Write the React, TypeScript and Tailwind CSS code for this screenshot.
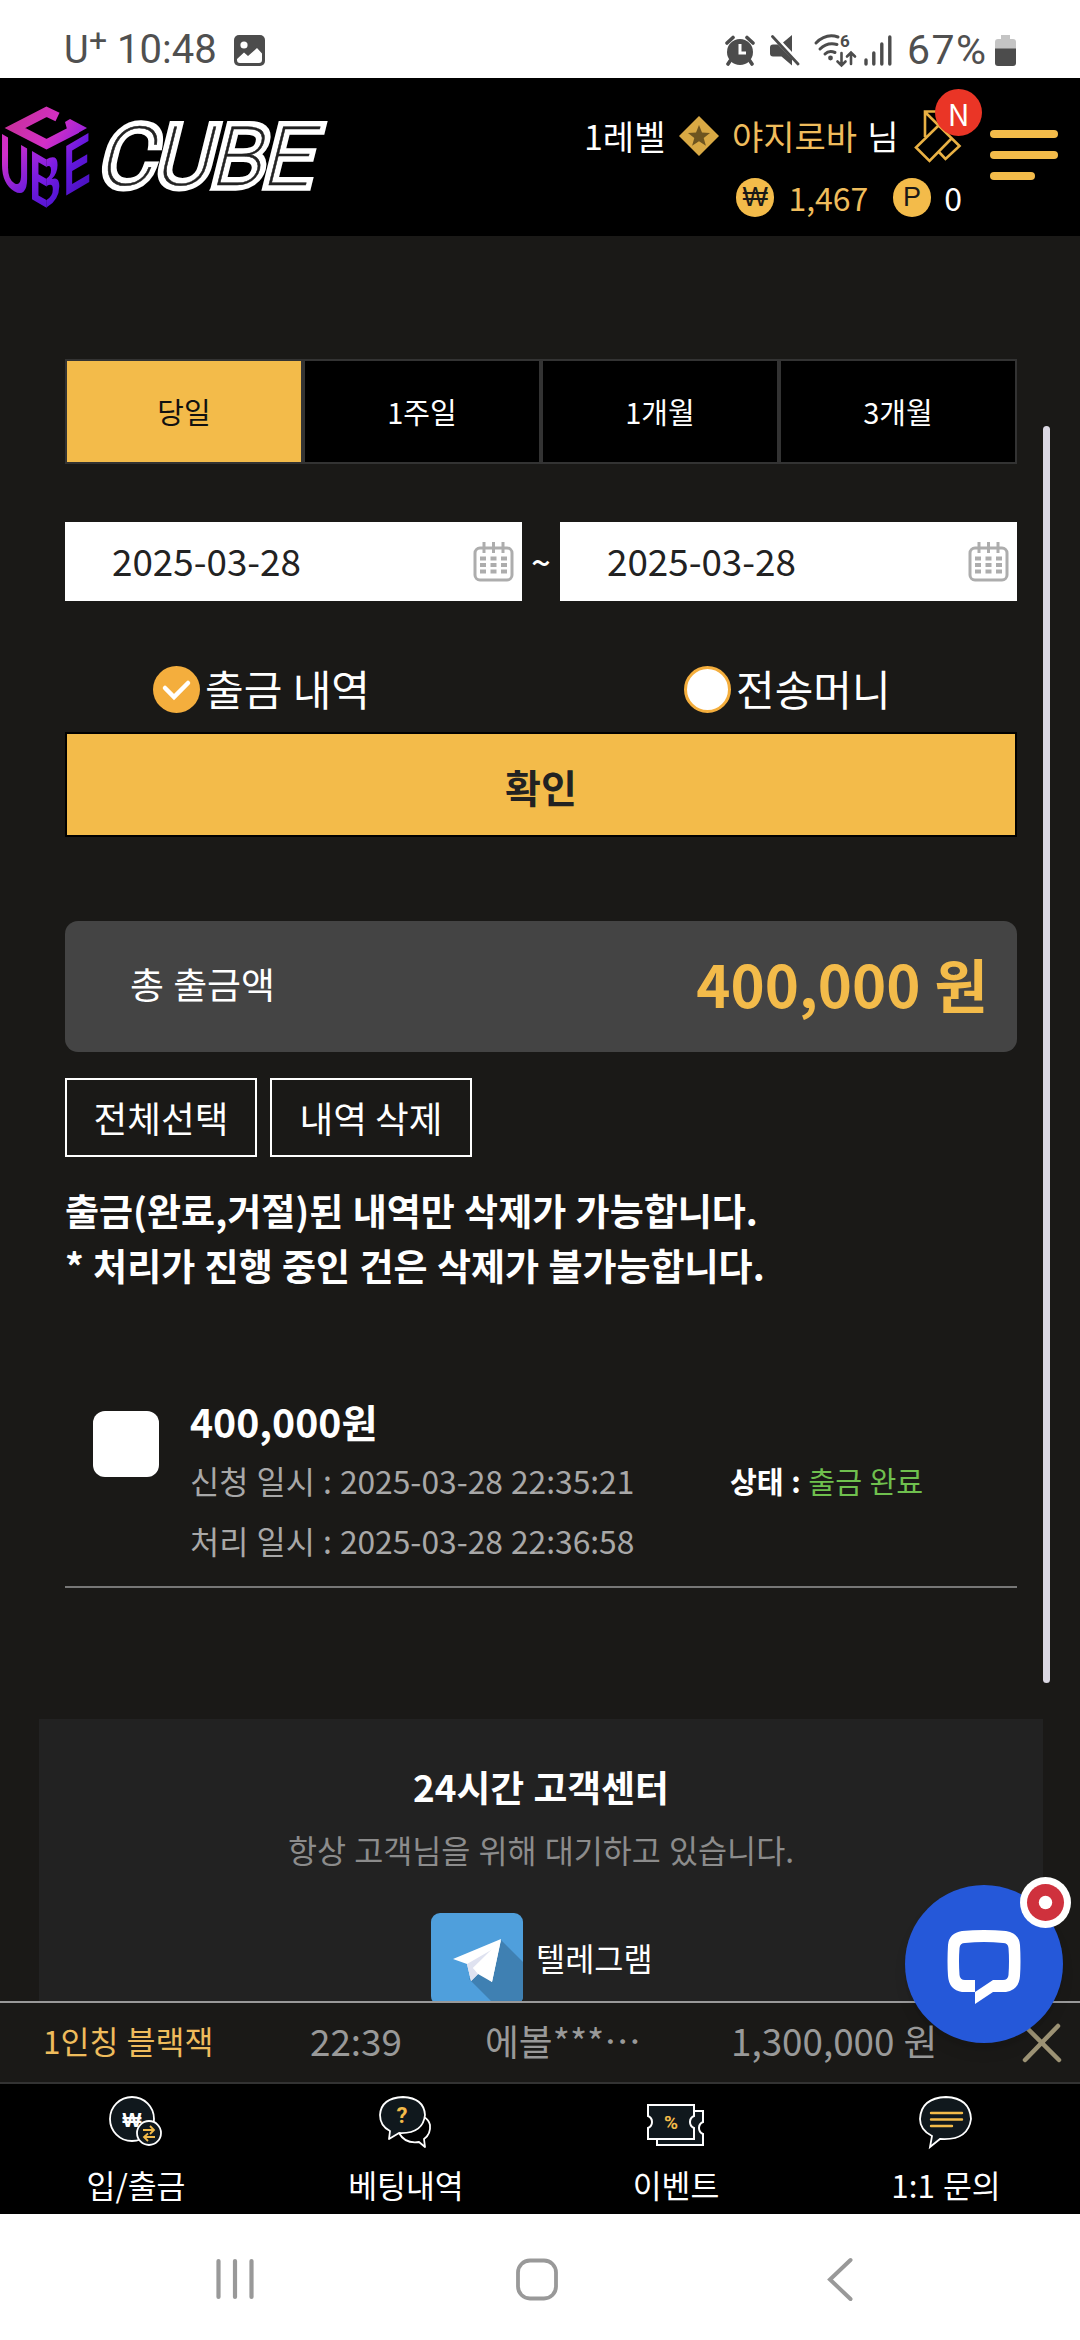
import type { ReactNode } from "react";

const GOLD = "#f3bb4a";

function StatusBar() {
  return (
    <div className="flex h-[78px] items-center bg-white pl-[64px] pr-[64px] pt-[22px] font-[Roboto] text-[40px] font-light leading-[56px] text-[#505050]">
      <span className="w-[25px] text-[38px] font-normal">U</span>
      <span className="-mt-[20px] w-[28px] text-[32px] font-normal">+</span>
      <span className="w-[112px] whitespace-nowrap font-normal">10:48</span>
      <svg className="ml-[5px]" width="31" height="31" viewBox="0 0 31 31">
        <rect width="31" height="31" rx="5" fill="#4c4c4c" />
        <circle cx="10" cy="10" r="3.6" fill="#fff" />
        <path d="M3 24 10 17.5 14 21 23 13 28 18.5V25a3 3 0 0 1-3 3H6a3 3 0 0 1-3-3z" fill="#fff" />
      </svg>
      <div className="ml-auto flex items-center">
        <svg width="30" height="31" viewBox="0 0 30 31" className="mr-[15px]">
          <circle cx="15" cy="17" r="13" fill="#4c4c4c" />
          <path d="M2 8 8 2.500M22 2.500 28 8M5 26 3 29M25 26 27 29" stroke="#4c4c4c" strokeWidth="3.600" strokeLinecap="round" />
          <path d="M15 9v9h6" stroke="#fff" strokeWidth="3" fill="none" />
        </svg>
        <svg width="30" height="31" viewBox="0 0 30 31" className="mr-[14px]">
          <path d="M3 9.500h5L22 24v6.500L11.500 21.500H3a3 3 0 0 1-3-3v-6a3 3 0 0 1 3-3zM13 7.500 22 0V17z" fill="#4c4c4c" />
          <path d="M2.500 1.500 28 29" stroke="#4c4c4c" strokeWidth="2.800" strokeLinecap="round" />
        </svg>
        <svg width="42" height="34" viewBox="0 0 42 34" fill="none" className="mr-[8px] overflow-visible">
          <g stroke="#4c4c4c" strokeWidth="3" strokeLinecap="round">
            <path d="M2 10Q12 0 24 4M6 16Q13 9 23 11.500M11 21Q15 17 21 19.500" />
            <path d="M27.500 20V32M23.500 28.500l4 4 4-4M37 31V19.500M33 23.500l4-4 4 4" strokeWidth="2.600" />
          </g>
          <circle cx="16.500" cy="25" r="2.400" fill="#4c4c4c" />
          <text x="26" y="14" fontSize="17" fontWeight="700" fontFamily="Roboto" fill="#4c4c4c">6</text>
        </svg>
        <svg width="28" height="31" viewBox="0 0 28 31" className="mr-[15px]">
          <path d="M2 25v4M9.800 18v11M17.800 9v20M25.800 2v27" stroke="#4c4c4c" strokeWidth="3.400" strokeLinecap="round" />
        </svg>
        <span className="w-[88px] whitespace-nowrap text-[41px] font-normal tracking-[1.500px]">67%</span>
        <svg width="21" height="31" viewBox="0 0 21 31">
          <path d="M6 0h9v4h3a3 3 0 0 1 3 3v8H0V7a3 3 0 0 1 3-3h3z" fill="#c4c4c4" />
          <path d="M0 13.500h21V28a3 3 0 0 1-3 3H3a3 3 0 0 1-3-3z" fill="#4c4c4c" />
        </svg>
      </div>
    </div>
  );
}

function Logo() {
  return (
    <svg width="332" height="112" viewBox="0 100 332 112" className="overflow-visible">
      <defs>
        <linearGradient id="cube" gradientUnits="userSpaceOnUse" x1="20" y1="110" x2="85" y2="150">
          <stop offset="0" stopColor="#c9309e" />
          <stop offset="0.500" stopColor="#d32fc6" />
          <stop offset="1" stopColor="#8a1fe0" />
        </linearGradient>
        <linearGradient id="faceL" x1="0" y1="0" x2="0.600" y2="1">
          <stop offset="0" stopColor="#d22fb4" />
          <stop offset="0.400" stopColor="#cf2fcb" />
          <stop offset="1" stopColor="#5f19dd" />
        </linearGradient>
        <linearGradient id="faceM" x1="0" y1="0" x2="0.300" y2="1">
          <stop offset="0" stopColor="#c42fd0" />
          <stop offset="0.500" stopColor="#7c1ce2" />
          <stop offset="1" stopColor="#4d14d0" />
        </linearGradient>
        <linearGradient id="faceR" x1="0" y1="0" x2="0.300" y2="1">
          <stop offset="0" stopColor="#a526dd" />
          <stop offset="0.500" stopColor="#6317de" />
          <stop offset="1" stopColor="#4a12c0" />
        </linearGradient>
        <clipPath id="halfL"><rect x="0" y="100" width="46.600" height="112" /></clipPath>
        <clipPath id="halfR"><rect x="46.400" y="100" width="60" height="112" /></clipPath>
      </defs>
      <path d="M57.500 117 46.500 111.800 15 128 46.500 144.200 77 128.500" fill="none" stroke="url(#cube)" strokeWidth="9.500" />
      <path d="M65 122 70 119 87 128 78 133 67 129z" fill="url(#cube)" />
      <g fontFamily="Liberation Sans" fontWeight="700">
        <text transform="matrix(0.58 0.335 0 1 -0.500 182)" fontSize="72" fill="url(#faceL)">U</text>
        <g clipPath="url(#halfL)">
          <text transform="matrix(0.64 0.370 0 1 29 197.500)" fontSize="70" fill="url(#faceM)">B</text>
        </g>
        <g clipPath="url(#halfR)">
          <text transform="matrix(0.64 -0.370 0 1 29 217.500)" fontSize="70" fill="url(#faceM)">B</text>
        </g>
        <text transform="matrix(0.570 -0.330 0 1 63.500 197)" fontSize="72" fill="url(#faceR)">E</text>
      </g>
      <g transform="translate(97 184.500) skewX(-14)" fontFamily="Roboto" fontWeight="100" fontSize="82">
        <text textLength="212" lengthAdjust="spacingAndGlyphs" fill="#222" stroke="#fff" strokeWidth="11.500" strokeLinejoin="miter">CUBE</text>
        <text textLength="212" lengthAdjust="spacingAndGlyphs" fill="#222" stroke="#222" strokeWidth="0.500">CUBE</text>
      </g>
    </svg>
  );
}

function Coin({ children }: { children: ReactNode }) {
  return (
    <span className="flex size-[39px] items-center justify-center rounded-full bg-[#f3bb4a] font-['Liberation_Sans'] text-[27px] leading-none text-[#1a1917]">
      {children}
    </span>
  );
}

function Header() {
  return (
    <header className="flex h-[158px] bg-black">
      <div className="w-[332px] pt-[22px]"><Logo /></div>
      <div className="ml-auto flex w-[378px] flex-col">
        <div className="relative mt-[30px] flex h-[56px] items-center whitespace-nowrap text-[34px] leading-[56px] text-white">
          <span className="w-[95px]">1레벨</span>
          <svg width="40" height="40" viewBox="0 0 40 40">
            <path d="M20 0 40 20 20 40 0 20z" fill="#d9a944" />
            <path d="m20 9 3 7.500 8 .4-6.300 5 2.200 7.800-6.900-4.500-6.900 4.500 2.200-7.800-6.300-5 8-.4z" fill="#6e5520" />
          </svg>
          <span className="ml-[13px] text-[#efbc5c]">야지로바</span>
          <span className="ml-[10px]">님</span>
          <svg className="absolute left-[330px] top-0" width="48" height="56" viewBox="0 0 48 56" fill="none" stroke="#e9b144" strokeWidth="2.600">
            <path d="M11 29V3.500H33M11 4 45.500 38 31.500 51 24 43M24 18 2 39.500 15.500 53 38 30" />
          </svg>
          <span className="absolute left-[351px] top-[-19px] flex size-[47px] items-center justify-center rounded-full bg-[#ea3526] text-[30px] leading-none">N</span>
        </div>
        <div className="ml-[152px] mt-[3px] flex h-[60px] items-center text-[32px] leading-[60px]">
          <Coin>₩</Coin>
          <span className="ml-[14px] w-[106px] text-[#efbc5c]">1,467</span>
          <Coin>P</Coin>
          <span className="ml-[13px] text-white">0</span>
        </div>
      </div>
      <div className="ml-[28px] mr-[22px] mt-[52px] flex w-[68px] flex-col gap-[13px]">
        <i className="h-[8px] rounded-full bg-[#f3bb4a]" />
        <i className="h-[8px] rounded-full bg-[#f3bb4a]" />
        <i className="h-[8px] w-[45px] rounded-full bg-[#f3bb4a]" />
      </div>
    </header>
  );
}

function DateField() {
  return (
    <div className="flex h-[79px] w-[457px] items-center justify-between bg-white pl-[47px] pr-[8px] text-[36.800px] text-[#222]">
      <span className="-mt-[2px]">2025-03-28</span>
      <svg width="41" height="40" viewBox="0 0 41 40" fill="none" stroke="#adadad" strokeWidth="3">
        <rect x="2" y="6" width="37" height="32" rx="5" />
        <path d="M11 0v11M20.500 0v11M30 0v11" />
        <path d="M7 16.500h27M7 23h27M7 29.500h27" strokeWidth="4" strokeDasharray="6 4.500" />
      </svg>
    </div>
  );
}

function History() {
  return (
    <main className="mx-[65px] mr-[63px] w-[952px] pt-[123px] text-white">
      <div className="flex h-[105px] w-[952px] text-[29px]">
        {["당일", "1주일", "1개월", "3개월"].map((t, i) => (
          <button key={t} className={i === 0 ? "w-[238px] border-2 border-[#333] bg-[#f3bb4a] text-[#111]" : "w-[238px] border-2 border-[#333] bg-black"}>
            {t}
          </button>
        ))}
      </div>
      <div className="mt-[58px] flex h-[79px] items-center justify-between">
        <DateField />
        <span className="text-[34px] font-medium">~</span>
        <DateField />
      </div>
      <div className="mt-[61px] flex h-[55px] items-center text-[42px] leading-[55px]">
        <label className="flex w-[531px] items-center gap-[5px] pl-[88px]">
          <svg width="47" height="47" viewBox="0 0 47 47">
            <circle cx="23.500" cy="23.500" r="23.500" fill="#f4ae3d" />
            <path d="m12 22 9 9 14-14" fill="none" stroke="#fff" strokeWidth="4.500" strokeLinecap="round" />
          </svg>
          <span className="-mt-[4px]">출금 내역</span>
        </label>
        <label className="flex items-center gap-[5px] pl-[88px]">
          <span className="size-[47px] rounded-full border-[3px] border-[#f4ae3d] bg-white" />
          <span className="-mt-[4px]">전송머니</span>
        </label>
      </div>
      <button className="mt-[15px] block h-[105px] w-full border-2 border-black bg-[#f3bb4a] pt-[3px] text-[39px] font-bold text-[#222]">확인</button>
      <section className="mt-[84px] flex h-[131px] items-center justify-between rounded-[13px] bg-[#444] pl-[65px] pr-[29px]">
        <span className="-mt-[6px] text-[36.900px]">총 출금액</span>
        <span className="-mt-[6px] text-[58px] font-bold text-[#f3bb4a]">400,000 원</span>
      </section>
      <div className="mt-[26px] flex gap-[13px] text-[36.700px]">
        <button className="h-[79px] w-[192px] whitespace-nowrap border-2 border-white">전체선택</button>
        <button className="h-[79px] w-[202px] whitespace-nowrap border-2 border-white">내역 삭제</button>
      </div>
      <p className="mt-[26px] whitespace-nowrap text-[37px] font-bold leading-[55px]">
        출금(완료,거절)된 내역만 삭제가 가능합니다.
        <br />* 처리가 진행 중인 건은 삭제가 불가능합니다.
      </p>
      <article className="mt-[104px] flex h-[191px] whitespace-nowrap border-b-2 border-[#777] pl-[28px]">
        <span className="mt-[14px] size-[66px] rounded-[12px] bg-white" />
        <div className="ml-[31px] w-[540px] text-[31.750px] leading-[60px] text-[#a8a8a8]">
          <div className="h-[53px] text-[39.200px] font-bold leading-[48px] text-white">400,000원</div>
          <div>신청 일시 : 2025-03-28 22:35:21</div>
          <div>처리 일시 : 2025-03-28 22:36:58</div>
        </div>
        <div className="mt-[53px] text-[29.200px] leading-[60px]">
          <b>상태 :</b> <span className="text-[#6fc04e]">출금 완료</span>
        </div>
      </article>
    </main>
  );
}

function Support() {
  return (
    <section className="ml-[39px] mt-[131px] flex h-[282px] w-[1004px] flex-col items-center overflow-hidden bg-[#222]">
      <h2 className="mt-[39px] text-[36.800px] font-bold leading-[56px] text-white">24시간 고객센터</h2>
      <p className="mt-[10px] text-[31.600px] leading-[50px] text-[#8c8c8c]">항상 고객님을 위해 대기하고 있습니다.</p>
      <div className="mt-[39px] flex items-center gap-[13px] self-start pl-[392px] text-[31.700px] text-white">
        <svg width="92" height="92" viewBox="0 0 92 92">
          <rect width="92" height="92" rx="9" fill="#4f9fdc" />
          <path d="m70 27 22 22v34a9 9 0 0 1-9 9H64L38 66z" fill="#3f80b2" />
          <path d="m22 46 48-20-9 43-14-8-7 7-4-17z" fill="#fff" />
          <path d="m36 51 4 17 7-7-5-6 20-19z" fill="#dfe2f0" />
          <path d="m42 55 28-28-9 42z" fill="#fff" />
        </svg>
        <span className="-mt-[3px]">텔레그램</span>
      </div>
    </section>
  );
}

function Ticker() {
  return (
    <div className="flex h-[83px] items-center whitespace-nowrap border-b-2 border-t-2 border-b-[#333] border-t-[#999] bg-[#1a1917] pl-[43px] text-[36.800px] text-[#999]">
      <span className="-mt-[3px] w-[267px] text-[31.500px] text-[#efbc5c]">1인칭 블랙잭</span>
      <span className="-mt-[3px] w-[175px]">22:39</span>
      <span className="-mt-[3px] w-[246px]" lang="ko">에볼***…</span>
      <span className="-mt-[3px] w-[291px]">1,300,000 원</span>
      <svg width="40" height="40" viewBox="0 0 40 40" stroke="#9c9274" strokeWidth="4.500" strokeLinecap="round">
        <path d="m3 3 34 34M36 3 3 37" />
      </svg>
    </div>
  );
}

function MoneyIcon() {
  return (
    <svg width="54" height="54" viewBox="0 0 54 54">
      <circle cx="23" cy="23" r="22" fill="#10181d" stroke="#fff" strokeWidth="1.800" />
      <text x="23" y="30.500" textAnchor="middle" fontSize="20" fontWeight="700" fontFamily="Liberation Sans" fill="#fff">₩</text>
      <circle cx="40" cy="37" r="12" fill="#10181d" stroke="#fff" strokeWidth="1.800" />
      <path d="M34 34h11m-4-4 4 4-4 4M46 41H35m4-3.500-4 3.500 4 4" fill="none" stroke={GOLD} strokeWidth="1.800" />
    </svg>
  );
}

function QuestionIcon() {
  return (
    <svg width="54" height="54" viewBox="0 0 54 54" stroke="#fff" strokeWidth="1.800" strokeLinejoin="round">
      <path d="M20 37Q26 48 40 46l6 5-1-8Q52 38 51 29 50 24 45 21" fill="#000" />
      <path d="M11 35Q1 30 1 19 2 2 24 1 45 2 46 19 44 38 20 37L10 43z" fill="#10181d" />
      <text x="23" y="27" textAnchor="middle" fontSize="22" fontWeight="700" fontFamily="Roboto" fill={GOLD} stroke="none">?</text>
    </svg>
  );
}

function CouponIcon() {
  return (
    <svg width="60" height="54" viewBox="0 0 60 54" fill="#10181d" stroke="#fff" strokeWidth="2">
      <path d="M11 15H57V26a6.500 6.500 0 0 0 0 12V49H11z" />
      <path d="M2 9H48V20a6.500 6.500 0 0 0 0 12V43H2V32a6.500 6.500 0 0 0 0-12z" />
      <text x="25" y="33" textAnchor="middle" fontSize="19" fontWeight="700" fontFamily="Roboto" fill={GOLD} stroke="none">%</text>
    </svg>
  );
}

function InquiryIcon() {
  return (
    <svg width="54" height="54" viewBox="0 0 54 54" strokeLinecap="round">
      <path d="M13 40Q1 34 1 23 2 2 27 1 51 2 52 23 49 45 21 43L11 51z" fill="#10181d" stroke="#fff" strokeWidth="1.800" />
      <path d="M12 17H43M12 23.500H43M12 30H33" stroke={GOLD} strokeWidth="2.400" />
    </svg>
  );
}

function Nav() {
  const items: [string, ReactNode][] = [
    ["입/출금", <MoneyIcon />],
    ["베팅내역", <QuestionIcon />],
    ["이벤트", <CouponIcon />],
    ["1:1 문의", <InquiryIcon />],
  ];
  return (
    <nav className="grid h-[130px] grid-cols-4 bg-black text-[31.400px] leading-[50px] text-white">
      {items.map(([label, icon]) => (
        <a key={label} className="flex flex-col items-center pl-[2px] pt-[12px]">
          {icon}
          <span className="mt-[10px]">{label}</span>
        </a>
      ))}
    </nav>
  );
}

function SystemNav() {
  return (
    <div className="flex h-[126px] bg-white pl-[215px] pt-[43px]">
      <svg width="40" height="44" viewBox="0 0 40 44" stroke="#999" strokeWidth="4.200" strokeLinecap="round">
        <path d="M3.500 4v36M20 4v36M36.500 4v36" />
      </svg>
      <svg className="ml-[260px]" width="44" height="44" viewBox="0 0 44 44">
        <rect x="3" y="3.500" width="38" height="38" rx="12" fill="none" stroke="#999" strokeWidth="3.800" />
      </svg>
      <svg className="ml-[268px]" width="28" height="44" viewBox="0 0 28 44">
        <path d="M23.500 3 3 22.500 23.500 42" fill="none" stroke="#999" strokeWidth="4" strokeLinecap="round" />
      </svg>
    </div>
  );
}

function ChatButton() {
  return (
    <div className="absolute left-[905px] top-[1877px]">
      <div className="mt-[8px] flex size-[158px] items-center justify-center rounded-full bg-[#2558d9] shadow-lg">
        <svg width="74" height="74" viewBox="0 0 74 74" className="mt-[5px]">
          <path fillRule="evenodd" d="M15 1Q37-1 59 1 72 3 73 15q1 17 0 31-1 14-14 16H46L28 74V62H15Q2 60 1 46 0 32 1 15 2 3 15 1zM18 13Q37 11 56 13q5 0 5.500 5 1 13 0 27-.5 5-5.500 5H46L28 62V50H18q-5 0-5.500-5-1-14 0-27 .5-5 5.500-5z" fill="#fff" />
        </svg>
      </div>
      <svg className="absolute left-[115px] top-0" width="51" height="51" viewBox="0 0 51 51">
        <circle cx="25.500" cy="25.500" r="25.500" fill="#fff" />
        <circle cx="25.500" cy="25.500" r="18.500" fill="#cf313d" />
        <circle cx="25.500" cy="25.500" r="6.700" fill="#fff" />
      </svg>
    </div>
  );
}

export default function App() {
  return (
    <div className="relative h-[2340px] w-[1080px] overflow-hidden bg-[#1a1917] font-['Noto_Sans_CJK_KR',sans-serif] [word-spacing:0.06em]">
      <StatusBar />
      <Header />
      <History />
      <Support />
      <Ticker />
      <Nav />
      <SystemNav />
      <div className="absolute left-[1043px] top-[426px] h-[1257px] w-[7px] rounded-full bg-[#dbd8e3]" />
      <ChatButton />
    </div>
  );
}
